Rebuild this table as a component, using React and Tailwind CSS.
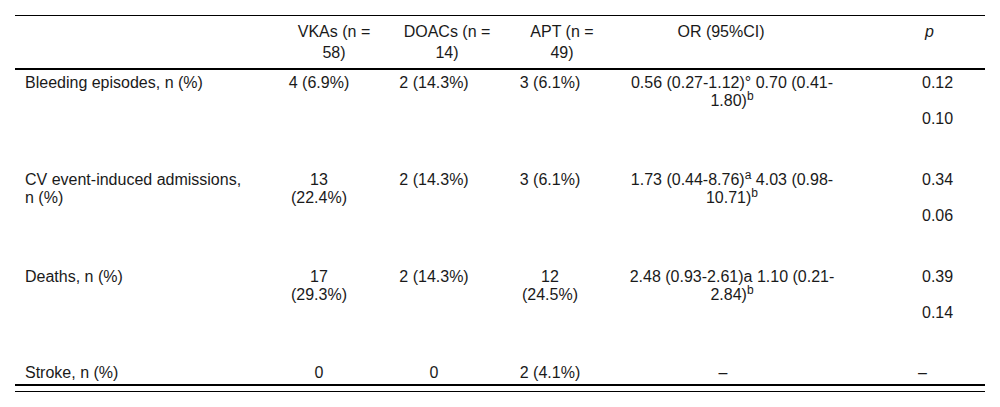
const rows = [
  {
    label: "Bleeding episodes, n (%)",
    vka: "4 (6.9%)",
    doac: "2 (14.3%)",
    apt: "3 (6.1%)",
    or: (
      <>
        0.56 (0.27-1.12)° 0.70 (0.41-1.80)<sup>b</sup>
      </>
    ),
    p: ["0.12", "0.10"],
    h: "h-[97px]",
  },
  {
    label: "CV event-induced admissions, n (%)",
    vka: "13 (22.4%)",
    doac: "2 (14.3%)",
    apt: "3 (6.1%)",
    or: (
      <>
        1.73 (0.44-8.76)<sup>a</sup> 4.03 (0.98-10.71)<sup>b</sup>
      </>
    ),
    p: ["0.34", "0.06"],
    h: "h-[97px]",
  },
  {
    label: "Deaths, n (%)",
    vka: "17 (29.3%)",
    doac: "2 (14.3%)",
    apt: "12 (24.5%)",
    or: (
      <>
        2.48 (0.93-2.61)a 1.10 (0.21-2.84)<sup>b</sup>
      </>
    ),
    p: ["0.39", "0.14"],
    h: "h-[96px]",
  },
];

const cols = "grid grid-cols-[247px_114px_116px_116px_248px_129px]";

const App = () => {
  return (
    <div className="w-[1000px] h-[407px] bg-white pt-[15px] px-[15px] text-[16px] leading-[18px] text-[#1a1a1a] [font-family:'Liberation_Sans',Arial,sans-serif]">
      <div className="border-t border-black">
        {/* header */}
        <div className={`${cols} pt-[5px] pb-[5px] leading-[21px] border-b-2 border-black`}>
          <div />
          <div className="pl-[33px] pr-[3px] text-center">VKAs (n = 58)</div>
          <div className="pl-[26px] pr-[0px] text-center">DOACs (n = 14)</div>
          <div className="pl-[36px] pr-[12px] text-center">APT (n = 49)</div>
          <div className="pl-[14px] pr-[36px] text-center">OR (95%CI)</div>
          <div className="pl-[69px] text-left italic">p</div>
        </div>

        {/* body */}
        {rows.map((r) => (
          <div key={r.label} className={`${cols} ${r.h} pt-[4px]`}>
            <div className="pl-[10px] pr-[12px]">{r.label}</div>
            <div className="px-[19px] text-center">{r.vka}</div>
            <div className="px-[20px] text-center">{r.doac}</div>
            <div className="px-[20px] text-center">{r.apt}</div>
            <div className="px-[12px] text-center">{r.or}</div>
            <div className="pl-[66px]">
              <div>{r.p[0]}</div>
              <div className="mt-[18px]">{r.p[1]}</div>
            </div>
          </div>
        ))}

        <div className={`${cols} pt-[4px] pb-[2px] border-b-2 border-black`}>
          <div className="pl-[10px] pr-[12px]">Stroke, n (%)</div>
          <div className="px-[19px] text-center">0</div>
          <div className="px-[20px] text-center">0</div>
          <div className="px-[20px] text-center">2 (4.1%)</div>
          <div className="px-[12px] text-center">
            <span className="pr-[18px]">–</span>
          </div>
          <div className="pl-[62px]">–</div>
        </div>
        <div className="mt-[5px] border-t border-black" />
      </div>
    </div>
  );
};

export default App;
